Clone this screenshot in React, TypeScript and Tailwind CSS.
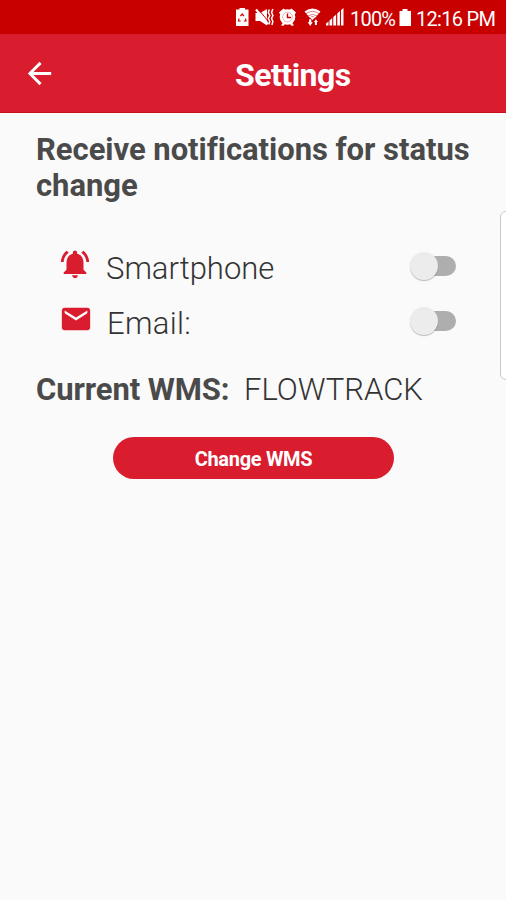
import type { ReactNode } from "react";
import { MdArrowBack, MdEmail, MdNotificationsActive } from "react-icons/md";

function StatusIcons() {
  return (
    <svg width="110" height="20" viewBox="236 8 110 20" fill="#fff" aria-hidden="true">
      {/* battery saver */}
      <path d="M239.500 9h5.500v1.600h3.500V27H236V10.600h3.500z" />
      <path d="M240.400 17.200l1.800-2.200 1.800 2.200M245.500 19.500l.5 2.500h-2.200M239 19.500l-.5 2.500h2.200" fill="none" stroke="#c80000" strokeWidth="1.200" />
      {/* vibrate / mute */}
      <path d="M255.500 14h4.500l7-4v16.500l-7-4.500h-4.500z" />
      <path d="M258.500 10.500l9.500 11.500" stroke="#c80000" strokeWidth="1" />
      <path d="M256 10.500l12 14.500" stroke="#fff" strokeWidth="2.200" />
      <path d="M269.300 10.500l-1 3 1.500 3-1.500 3 1.500 3-1 3M272.800 10l-1.200 3.500 1.300 3-1.300 3 1.300 3-1 3.500" fill="none" stroke="#fff" strokeWidth="1.500" />
      {/* alarm */}
      <circle cx="287.500" cy="18" r="7.800" />
      <path d="M279 13.500l4.500-4 2 1.500-5 5zM296 13.500l-4.500-4-2 1.500 5 5zM281 26.500l2-3 2 1.500-1.500 1.700zM294 26.500l-2-3-2 1.500 1.500 1.700z" />
      <circle cx="287.500" cy="18" r="4.900" fill="none" stroke="#c80000" strokeOpacity=".3" strokeWidth="1" />
      <path d="M287.500 14.500v4h3.500" fill="none" stroke="#c80000" strokeWidth="1.400" />
      {/* wifi */}
      <path d="M304.500 12.500Q312.500 6.500 320.500 12.500L315.500 18.500Q312.500 16.500 309.500 18.500z" />
      <path d="M306 14.600q6.500-4.500 13 0M307.800 16.900q4.700-3 9.400 0" fill="none" stroke="#c80000" strokeOpacity=".55" strokeWidth=".9" />
      <path d="M309.500 18h6l-3 3z" />
      <path d="M307.700 23.200h1.400v-3h2.200v3h1.400l-2.500 3.800zM314 23l1.900-2.700 1.900 2.700h-.9v3h-2v-3z" />
      {/* signal */}
      <path d="M326 26.500v-2l2.500-2v4zM329.500 26.500V21.500l2.700-2.500v7.500zM333.300 26.500V18l2.800-2.500v11zM337.300 26.500v-12l2.600-2.500v14.500zM341 26.500V11.300l2.500-2.300v17.500z" />
    </svg>
  );
}

function StatusBar() {
  return (
    <div className="flex h-[34px] items-center bg-[#c80000] pl-[236px] text-white">
      <StatusIcons />
      <span className="ml-[4px] mt-[4px] w-[46px] whitespace-nowrap text-[20px] leading-none tracking-[-0.8px]">100%</span>
      <svg className="ml-[3px]" width="13" height="19" viewBox="0 0 13 19" fill="#fff" aria-hidden="true">
        <path d="M3.500 1h5v2H12v15H.5V3h3z" />
      </svg>
      <span className="ml-[4px] mt-[4px] whitespace-nowrap text-[20px] leading-none tracking-[-0.7px]">12:16 PM</span>
    </div>
  );
}

function Switch({ label }: { label: string }) {
  return (
    <button role="switch" aria-checked="false" aria-label={label} className="flex h-5 w-[43px] items-center rounded-full bg-[#aeaeae]">
      <span className="-ml-[3px] h-7 w-7 shrink-0 rounded-full bg-[#ececec] shadow-[0_1px_1px_rgba(0,0,0,0.25)]" />
    </button>
  );
}

function SettingRow({ icon, label, text }: { icon: ReactNode; label: string; text: ReactNode }) {
  return (
    <div className="flex h-[55px] items-center justify-between pl-[58px] pr-[50px]">
      <div className="flex items-center">
        {icon}
        {text}
      </div>
      <Switch label={label} />
    </div>
  );
}

export default function App() {
  return (
    <div className="relative h-[900px] w-[506px] overflow-hidden bg-[#fafafa] font-['Roboto',sans-serif] text-[#4a4a4a]">
      <StatusBar />
      <header className="flex h-[79px] items-center border-b border-[#c80f1c] bg-[#da1c2f] pl-[22px] text-white">
        <MdArrowBack size={35} />
        <h1 className="ml-[178px] mt-[3px] text-[32px] font-bold leading-none tracking-[-0.5px]">Settings</h1>
      </header>

      <main>
        <h2 className="whitespace-nowrap pl-9 pt-[19px] text-[31px] font-bold leading-[36px] tracking-[-0.04px]">
          Receive notifications for status
          <br />
          change
        </h2>

        <div className="pt-[34px]">
          <SettingRow
            label="Smartphone"
            icon={<MdNotificationsActive size={34} className="-mt-1 text-[#da1c2f]" />}
            text={<span className="ml-[14px] mt-[6px] text-[31px] font-light leading-none text-[#333]">Smartphone</span>}
          />
          <SettingRow
            label="Email"
            icon={<MdEmail size={34} className="ml-px -mt-1 text-[#da1c2f]" />}
            text={<span className="ml-[14px] mt-[6px] text-[31px] font-light leading-none tracking-[0.3px] text-[#333]">Email:</span>}
          />
        </div>

        <div className="mt-[23px] flex h-[36px] items-center pl-9 text-[31px] leading-none">
          <span className="w-[208px] whitespace-nowrap font-bold tracking-[-0.08px]">Current WMS:</span>
          <span className="whitespace-nowrap font-light text-[#333]">FLOWTRACK</span>
        </div>

        <button className="ml-[113px] mt-[30px] flex h-[42px] w-[281px] items-center justify-center rounded-full bg-[#da1c2f] pt-[2px] text-[20px] font-bold tracking-[-0.3px] text-white">
          Change WMS
        </button>
      </main>

      {/* edge panel handle */}
      <div className="absolute left-[500px] top-[211px] h-[169px] w-4 rounded-[6px] border border-[#c9c9c9] bg-white" />
    </div>
  );
}
